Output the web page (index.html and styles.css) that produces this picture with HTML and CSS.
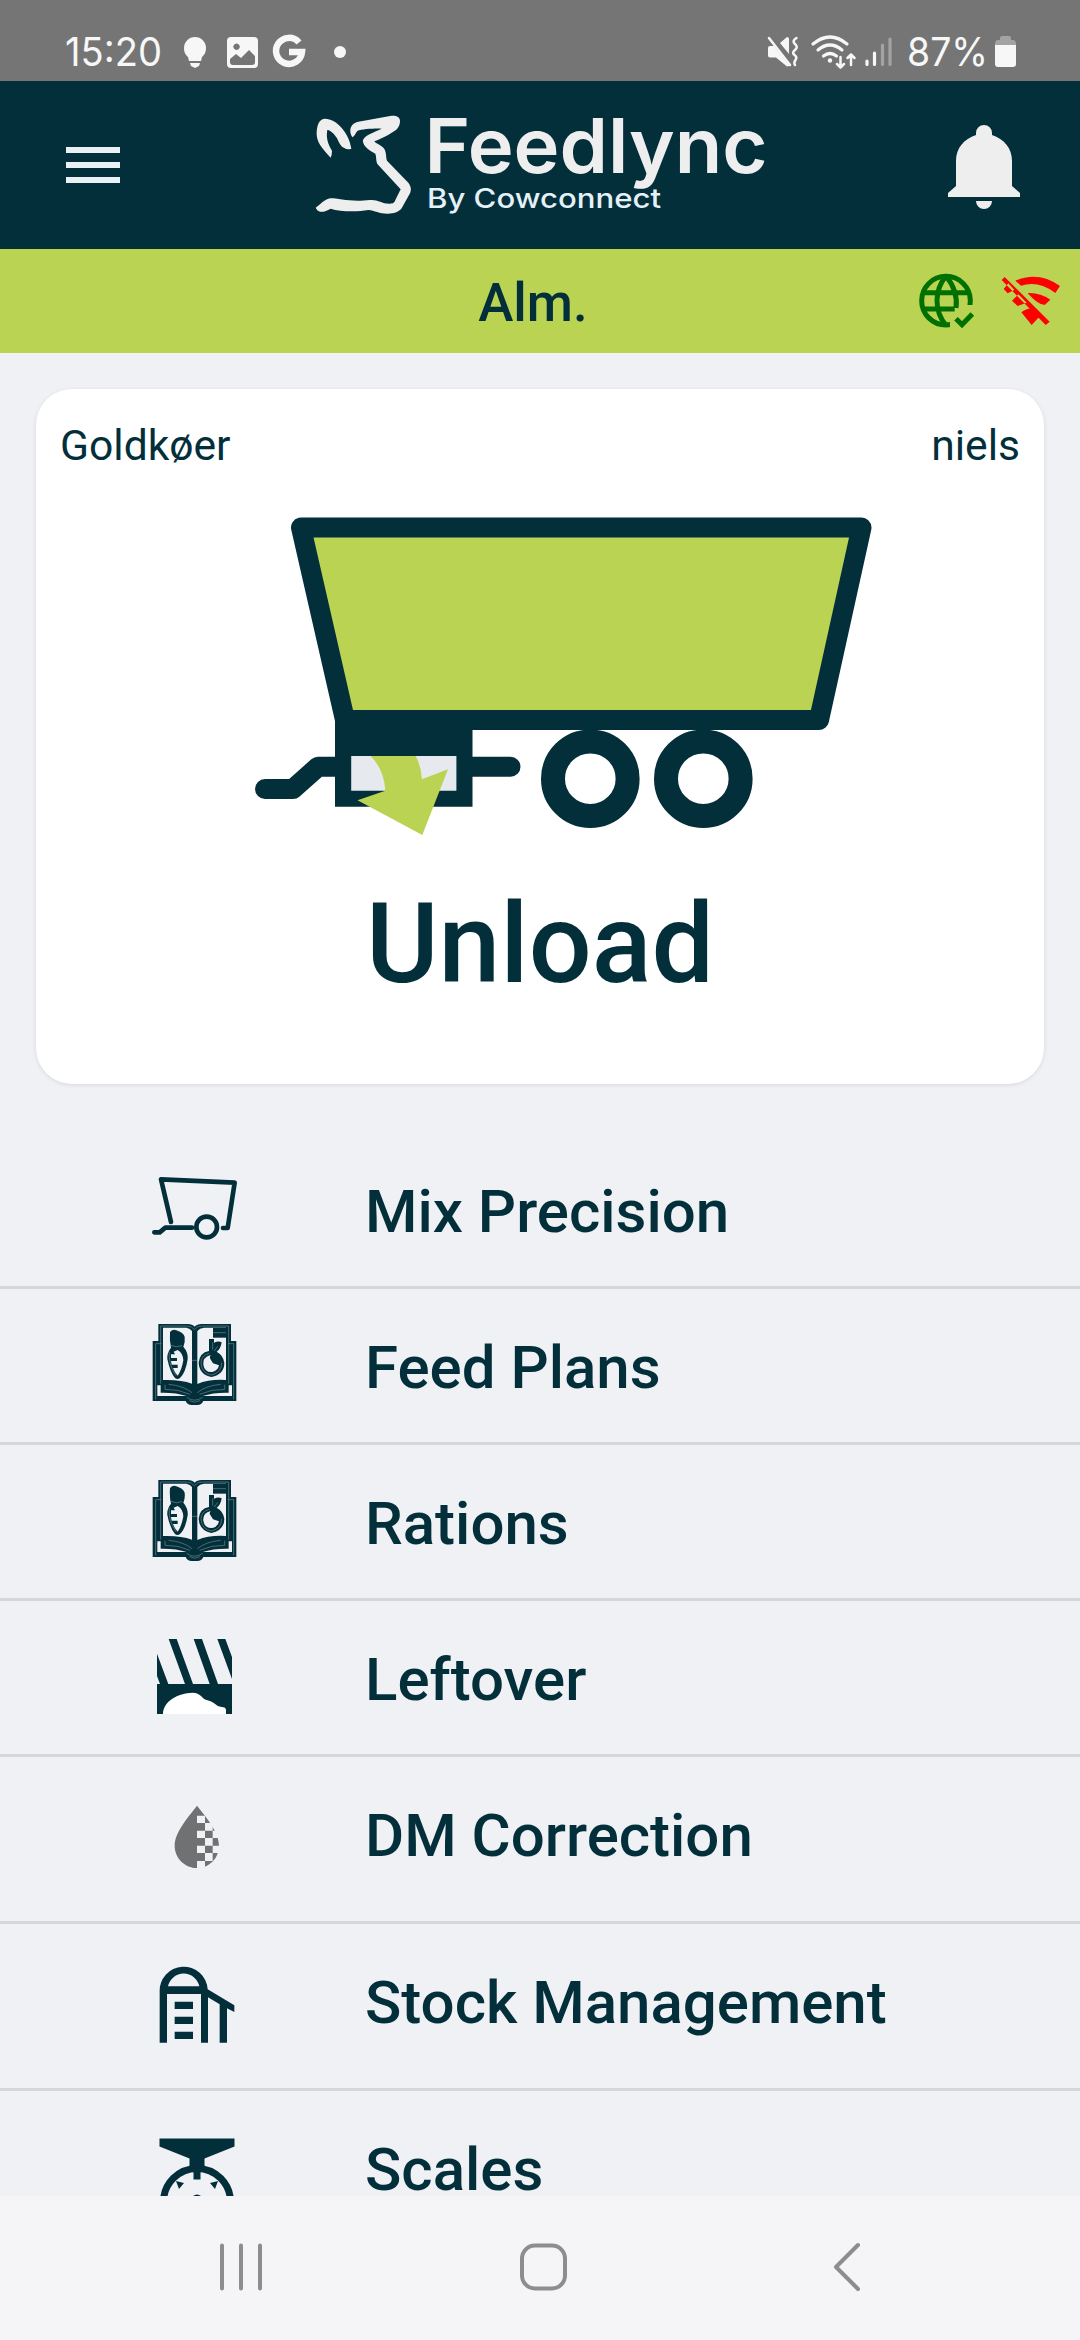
FILE: index.html
```html
<!DOCTYPE html>
<html lang="en">
<head>
    <meta charset="UTF-8">
    <meta name="viewport" content="width=device-width, initial-scale=1.0">
    <title>Feedlync</title>
    <link rel="stylesheet" href="styles.css">
</head>
<body>
    <div class="status">
        <svg class="status-left" width="420" height="81" viewBox="0 0 420 81">
            <text class="clock" x="65" y="66" textLength="97" lengthAdjust="spacingAndGlyphs">15:20</text>
            <path d="M195 37a11 11 0 0 1 11 11c0 5-2 7-4 9l-1 4h-12l-1-4c-2-2-4-4-4-9a11 11 0 0 1 11-11zM190 63h10l-1 3-4 2-4-2z"/>
            <path fill-rule="evenodd" d="M231 37h23a4 4 0 0 1 4 4v23a4 4 0 0 1-4 4h-23a4 4 0 0 1-4-4V41a4 4 0 0 1 4-4zM236.500 43.500a3.200 3.200 0 1 0 .1 0zM230 59v3a3 3 0 0 0 3 3h19a3 3 0 0 0 3-3v-6l-6-6-8 8-5-4z"/>
            <path class="line g" d="M299 42.500A13 13 0 1 0 302 52H289"/>
            <circle cx="340" cy="52" r="6"/>
        </svg>
        <svg class="status-right" width="320" height="81" viewBox="760 0 320 81">
            <path d="M768 48q0-2 2-2h4l15 19v1l-2 .500-11-9h-6q-2 0-2-2zM780 43l7-6q2 0 2 2v15z"/>
            <path class="line thin" d="M769 38l21 27M796.500 38q-5 3-1.500 6t0 6-.5 5 1 5-.5 5"/>
            <path class="line" d="M813 44q17-14 34 0M818 50q12-10 24 0M823.500 56q6.500-5 13 0"/>
            <path class="line thin" d="M840.500 57v10m-3.500-3l3.500 3.500 3.500-3.500M851 65V55m-3.500 3l3.500-3.500 3.500 3.500"/>
            <circle cx="830" cy="60.500" r="2.200"/>
            <path class="line" d="M867 61v3.500M874.500 53v11.500"/>
            <path class="line dim" d="M882.500 45v19.500M890 39v25.500"/>
            <text class="clock" x="907" y="66" textLength="81" lengthAdjust="spacingAndGlyphs">87%</text>
            <path class="shade" d="M1000 40v-2q0-2 2-2h7q2 0 2 2v2h2q3 0 3 4v1h-21v-1q0-4 3-4z"/>
            <path d="M995 45h21v19q0 3-3 3h-15q-3 0-3-3z"/>
        </svg>
    </div>

    <div class="header">
        <div class="burger">
            <span></span>
            <span></span>
            <span></span>
        </div>
        <svg class="logo" width="500" height="140" viewBox="0 0 500 140">
            <g transform="scale(.33333)">
                <path d="M122 203C95 175 80 155 80 132 80 105 88 86 105 86 140 86 178 130 184 176Q172 180 163 174C150 170 145 150 140 143 130 128 118 120 112 120 108 140 112 160 126 182Q126 195 122 203z"/>
                <path d="M187 142C183 135 180 128 181 120 182 108 190 98 205 95 240 90 270 82 305 77 320 76 330 82 330 92 330 108 322 118 312 124 295 136 270 148 253 154 258 162 275 165 283 177 290 190 287 200 291 212L355 278C364 290 364 300 360 310L335 355C325 368 310 370 295 371 270 372 255 362 235 360 200 366 150 365 122 356 110 362 100 367 90 365 83 363 80 358 77 353 90 345 100 330 120 325 150 325 180 337 240 330 265 328 275 342 300 341 310 341 313 338 316 330L332 298 262 222C257 212 260 200 256 191 245 185 220 170 219 155 218 143 230 135 275 116 250 115 215 118 203 122 195 130 197 135 187 142z"/>
            </g>
            <text class="logo-name" x="134.500" y="82.500" textLength="343" lengthAdjust="spacingAndGlyphs">Feedlync</text>
            <text class="logo-by" x="137" y="117.700" textLength="234" lengthAdjust="spacingAndGlyphs">By Cowconnect</text>
        </svg>
        <svg class="bell" width="72" height="84" viewBox="0 0 72 84">
            <path d="M28 10V8a8 8 0 0 1 16 0v2c12 4 20 13 20 26v25l8 7v4H0v-4l8-7V36C8 23 16 14 28 10zM28 76h16a8 8 0 0 1-16 0z"/>
        </svg>
    </div>

    <div class="farm">
        <span>Alm.</span>
        <svg class="farm-icons" width="200" height="104" viewBox="0 27 600 312">
            <g class="online">
                <circle cx="198" cy="182" r="73"/>
                <path d="M134 158h128M134 207h90M198 108c-36 44-36 104 0 148M198 108c26 32 34 66 30 96"/>
            </g>
            <path class="bar" d="M280 195h-32l-38 34v37h74z"/>
            <path class="online" d="M228 236l18 18 31-32"/>
            <g class="offline">
                <path d="M406 122q70-30 134 16l-14 21q-50-38-103-22zM444 159q36-2 67 20l-16 15q-16 4-50-32z"/>
                <path d="M374 111l135 134-12 10L365 120zM371 147l12 13 20-10-18-20zM396 182l17 16 27-10-25-25zM424 217q18-14 38-12l16 25-23 25z"/>
            </g>
        </svg>
    </div>

    <div class="card">
        <div class="card-top">
            <span>Goldkøer</span>
            <span>niels</span>
        </div>
        <svg class="trailer" width="660" height="340" viewBox="230 510 660 340">
            <path class="body" d="M301 527.500H861.500L819 720H345z"/>
            <path class="dark" d="M335 720h137.500v86.700H335z"/>
            <path class="rod" d="M265 789h28l25-22.300h17M472 766.700h38.500"/>
            <path class="window" d="M351.200 756h105.200v34.700H351.200z"/>
            <path class="arrow" d="M370.600 756h45q6 11 6.300 23.300l26.100-10-25.700 65.700-64.800-34.700 27.800-9.600q-1-21-14.700-34.700z"/>
            <circle class="wheel" cx="590.300" cy="778.700" r="37.300"/>
            <circle class="wheel" cx="703.300" cy="778.700" r="37.300"/>
        </svg>
        <h1>Unload</h1>
    </div>

    <ul class="menu">
        <li>
            <svg width="130" height="153" viewBox="0 -51 390 459">
                <path class="stroke" d="M123 216L93 88l221 10-21 136h-14M186 233h-80l-17 14H73"/>
                <circle class="stroke" cx="230" cy="231" r="31"/>
            </svg>
            <span>Mix Precision</span>
        </li>
        <li>
            <svg width="130" height="153" viewBox="0 417 390 459">
                <g id="book">
                    <path class="fill" d="M85 522h88q14 0 21 8 7-8 21-8h88v51h16v180h-99q-5 12-18 12h-17q-13 0-18-12H68V573h17z"/>
                    <path class="paper" d="M99 533h70q12 2 17 10v158q-35-13-87-11zM202 543q7-9 20-10h66v157q-50-3-86 12zM82 706h10v22q46-1 78 10H82zM306 706h-10v22q-46-1-78 10h88z"/>
                    <path class="hair" d="M77 748V581h17M311 748V581h-17M92 528h78q16 0 23 11 8-11 23-11h80v173M92 528v173M105 704v14q40-1 75 15M284 704v14q-40-1-75 15M116 703q44 4 70 25M272 703q-44 4-70 25M170 742q23 17 48 0M178 752q16 9 32 0"/>
                    <path class="fill" d="M120 546q9-10 19-5 20 6 25 19 2 17-4 30 15 17 13 38-6 40-23 56-8 6-15 0-15-18-23-57-2-18 11-34-5-20-3-47z"/>
                    <path class="paper" d="M131 605l12-5q16 9 17 31-5 30-17 46-10-10-14-23h14v-10h-18l-2-11h18v-9h-18v-11h12z"/>
                    <path class="fill" d="M237 567h15v11q13-6 23-1-3 21-15 28 20 11 23 33 0 35-39 43-36-7-38-43 3-30 31-35z"/>
                    <path class="paper" d="M242 615q-25 7-22 29 4 24 27 22 17-4 20-20l-18-6-8-13q-4-5 1-12z"/>
                    <path class="hair" d="M122 586q18 8 34 1M213 640q0-24 25-30M275 638q0 29-29 37-30-3-33-35M253 603l10-14M248 577v22M118 605q-4 38 20 72"/>
                    <path class="fill" d="M249 534h39v29h-39z"/>
                    <path class="hair" d="M249 548h39M186 631h15"/>
                </g>
            </svg>
            <span>Feed Plans</span>
        </li>
        <li>
            <svg width="130" height="153" viewBox="0 417 390 459">
                <use href="#book"/>
            </svg>
            <span>Rations</span>
        </li>
        <li>
            <svg width="130" height="153" viewBox="0 423 390 459">
                <path class="fill" d="M81 581l34 91H90l-9-24zM116 537h24l49 135h-24zM191 537h25l48 135h-25zM262 537h24l20 54v66zM81 672h225v90H81z"/>
                <path class="pile" d="M99 762c0-38 45-63 89-64 25 0 25 17 44 23 24 5 24 19 43 20 8 0 13 4 13 9v12z"/>
            </svg>
            <span>Leftover</span>
        </li>
        <li class="tall">
            <svg width="130" height="164" viewBox="0 -69 390 492">
                <path class="drop" d="M201 77c28 35 66 80 66 120 0 38-30 67-66 67s-67-29-67-67c0-40 40-85 67-120z"/>
                <path class="check" d="M201 107h24v22h-24zM201 152h24v22h-24zM201 197h24v22h-24zM201 243h24v22h-24zM225 129h23v23h-23zM225 174h23v23h-23zM225 219h23v24h-23zM248 152h22v22h-22zM248 197h22v22h-22zM248 107h22v22h-22z"/>
            </svg>
            <span>DM Correction</span>
        </li>
        <li class="tall">
            <svg width="130" height="164" viewBox="0 432 390 492">
                <path class="fill" fill-rule="evenodd" d="M89 788V636a72 72 0 0 1 144-8l80 48v20l-22-11v103h-22V673l-35-21v136h-21V642H111v146zM114 619h94a48 48 0 0 0-94 0z"/>
                <path class="fill" d="M134 665h55v22h-55zM134 710h55v22h-55zM134 755h55v22h-55z"/>
            </svg>
            <span>Stock Management</span>
        </li>
        <li class="tall">
            <svg width="130" height="164" viewBox="130 2091 130 164">
                <path class="fill" d="M159.500 2138.500h75v8l-30 12v9h-15v-9l-30-12z"/>
                <circle class="dial" cx="197" cy="2202" r="33.500"/>
                <path class="fill" d="M193.500 2168h7v11.500h-7zM176 2181l8 2-5 6zM218 2181l-8 2 5 6zM193 2196q4-3 8 0z"/>
            </svg>
            <span>Scales</span>
        </li>
    </ul>

    <div class="nav">
        <svg width="1080" height="144" viewBox="0 2196 1080 144">
            <path d="M222 2245.500v43M241 2245.500v43M260 2245.500v43"/>
            <rect x="522" y="2245.500" width="43" height="43" rx="13"/>
            <path d="M858 2245l-22 22 22 22"/>
        </svg>
    </div>
</body>
</html>
```

FILE: styles.css
```css
*{
    margin: 0;
    padding: 0;
    box-sizing: border-box;
    list-style: none;
}
body{
    display: flex;
    flex-direction: column;
    width: 1080px;
    height: 2340px;
    overflow: hidden;
    font-family: Roboto, sans-serif;
    color: #032f3b;
    background-color: #eff1f5;
}
svg{
    display: block;
    flex-shrink: 0;
}

/* status bar */
.status{
    display: flex;
    justify-content: space-between;
    height: 81px;
    background-color: #757575;
    fill: #f7f7f7;
}
.clock{
    font-family: Inter, sans-serif;
    font-size: 40px;
    font-weight: 400;
}
.line{
    fill: none;
    stroke: #f7f7f7;
    stroke-width: 3.2px;
    stroke-linecap: round;
    stroke-linejoin: round;
}
.thin{
    stroke-width: 2.5px;
}
.g{
    stroke-width: 6.5px;
    stroke-linecap: butt;
    stroke-linejoin: miter;
}
.dim{
    stroke: #a3a3a3;
}
.shade{
    fill: #a3a3a3;
}

/* header */
.header{
    display: flex;
    justify-content: space-between;
    align-items: center;
    height: 168px;
    padding: 0 60px 0 66px;
    background-color: #032f3b;
    fill: #eee;
}
.burger{
    display: flex;
    flex-direction: column;
    gap: 9px;
    width: 54px;
}
.burger span{
    height: 6px;
    background-color: #e9f1f5;
}
.logo{
    margin: -10px 0 0 12px;
}
.bell{
    margin-top: 4px;
}
.logo-name{
    font-family: Inter, sans-serif;
    font-size: 76px;
    font-weight: 600;
}
.logo-by{
    font-family: Inter, sans-serif;
    font-size: 27px;
    font-weight: 500;
    fill: #e4f1f7;
}

/* farm name + connection */
.farm{
    display: grid;
    grid-template-columns: 200px 1fr 200px;
    align-items: center;
    height: 104px;
    background-color: #bad353;
}
.farm span{
    grid-column: 2;
    padding: 3px 14px 0 0;
    text-align: center;
    font-size: 53px;
    font-weight: 500;
}
.online{
    fill: none;
    stroke: #007000;
    stroke-width: 15px;
}
.bar{
    fill: #bad353;
}
.offline{
    fill: #f00;
}

/* card */
.card{
    width: 1008px;
    height: 695px;
    margin: 36px 36px 0;
    border-radius: 36px;
    background-color: #fff;
    box-shadow: 0 1px 4px rgba(0, 0, 0, 0.1);
}
.card-top{
    display: flex;
    justify-content: space-between;
    padding: 31px 24px 0;
    line-height: 50px;
    font-size: 42.6px;
}
.trailer{
    margin: 40px 0 0 194px;
}
.card h1{
    margin-top: 29px;
    line-height: 130px;
    text-align: center;
    font-size: 111px;
    font-weight: 500;
}
.body{
    fill: #bad353;
    stroke: #032f3b;
    stroke-width: 20px;
    stroke-linejoin: round;
}
.dark{
    fill: #032f3b;
}
.rod{
    fill: none;
    stroke: #032f3b;
    stroke-width: 20px;
    stroke-linecap: round;
    stroke-linejoin: round;
}
.window{
    fill: #e6e9ee;
}
.arrow{
    fill: #bad353;
}
.wheel{
    fill: #fff;
    stroke: #032f3b;
    stroke-width: 24px;
}

/* menu */
.menu{
    flex: 1;
    padding-top: 49px;
    overflow: hidden;
}
.menu li{
    display: flex;
    align-items: center;
    height: 156px;
    padding-left: 130px;
    border-bottom: 3px solid #d4d6da;
}
.menu span{
    margin-left: 105px;
    padding-top: 4px;
    font-size: 60px;
    font-weight: 500;
}
.menu li.tall{
    height: 167px;
}
.menu .tall span{
    padding: 0 0 8px;
}
.fill{
    fill: #032f3b;
}
.paper{
    fill: #eff1f5;
}
.pile{
    fill: #fff;
}
.hair{
    fill: none;
    stroke: #8fa5ac;
    stroke-width: 1.5px;
}
.stroke{
    fill: none;
    stroke: #032f3b;
    stroke-width: 14px;
    stroke-linecap: round;
    stroke-linejoin: round;
}
.drop{
    fill: #707173;
}
.check{
    fill: #eff1f5;
}
.dial{
    fill: none;
    stroke: #032f3b;
    stroke-width: 7px;
}

/* android buttons */
.nav{
    height: 144px;
    background-color: #f5f5f8;
}
.nav svg{
    fill: none;
    stroke: #8d8d8f;
    stroke-width: 4px;
    stroke-linecap: round;
    stroke-linejoin: round;
}
```
